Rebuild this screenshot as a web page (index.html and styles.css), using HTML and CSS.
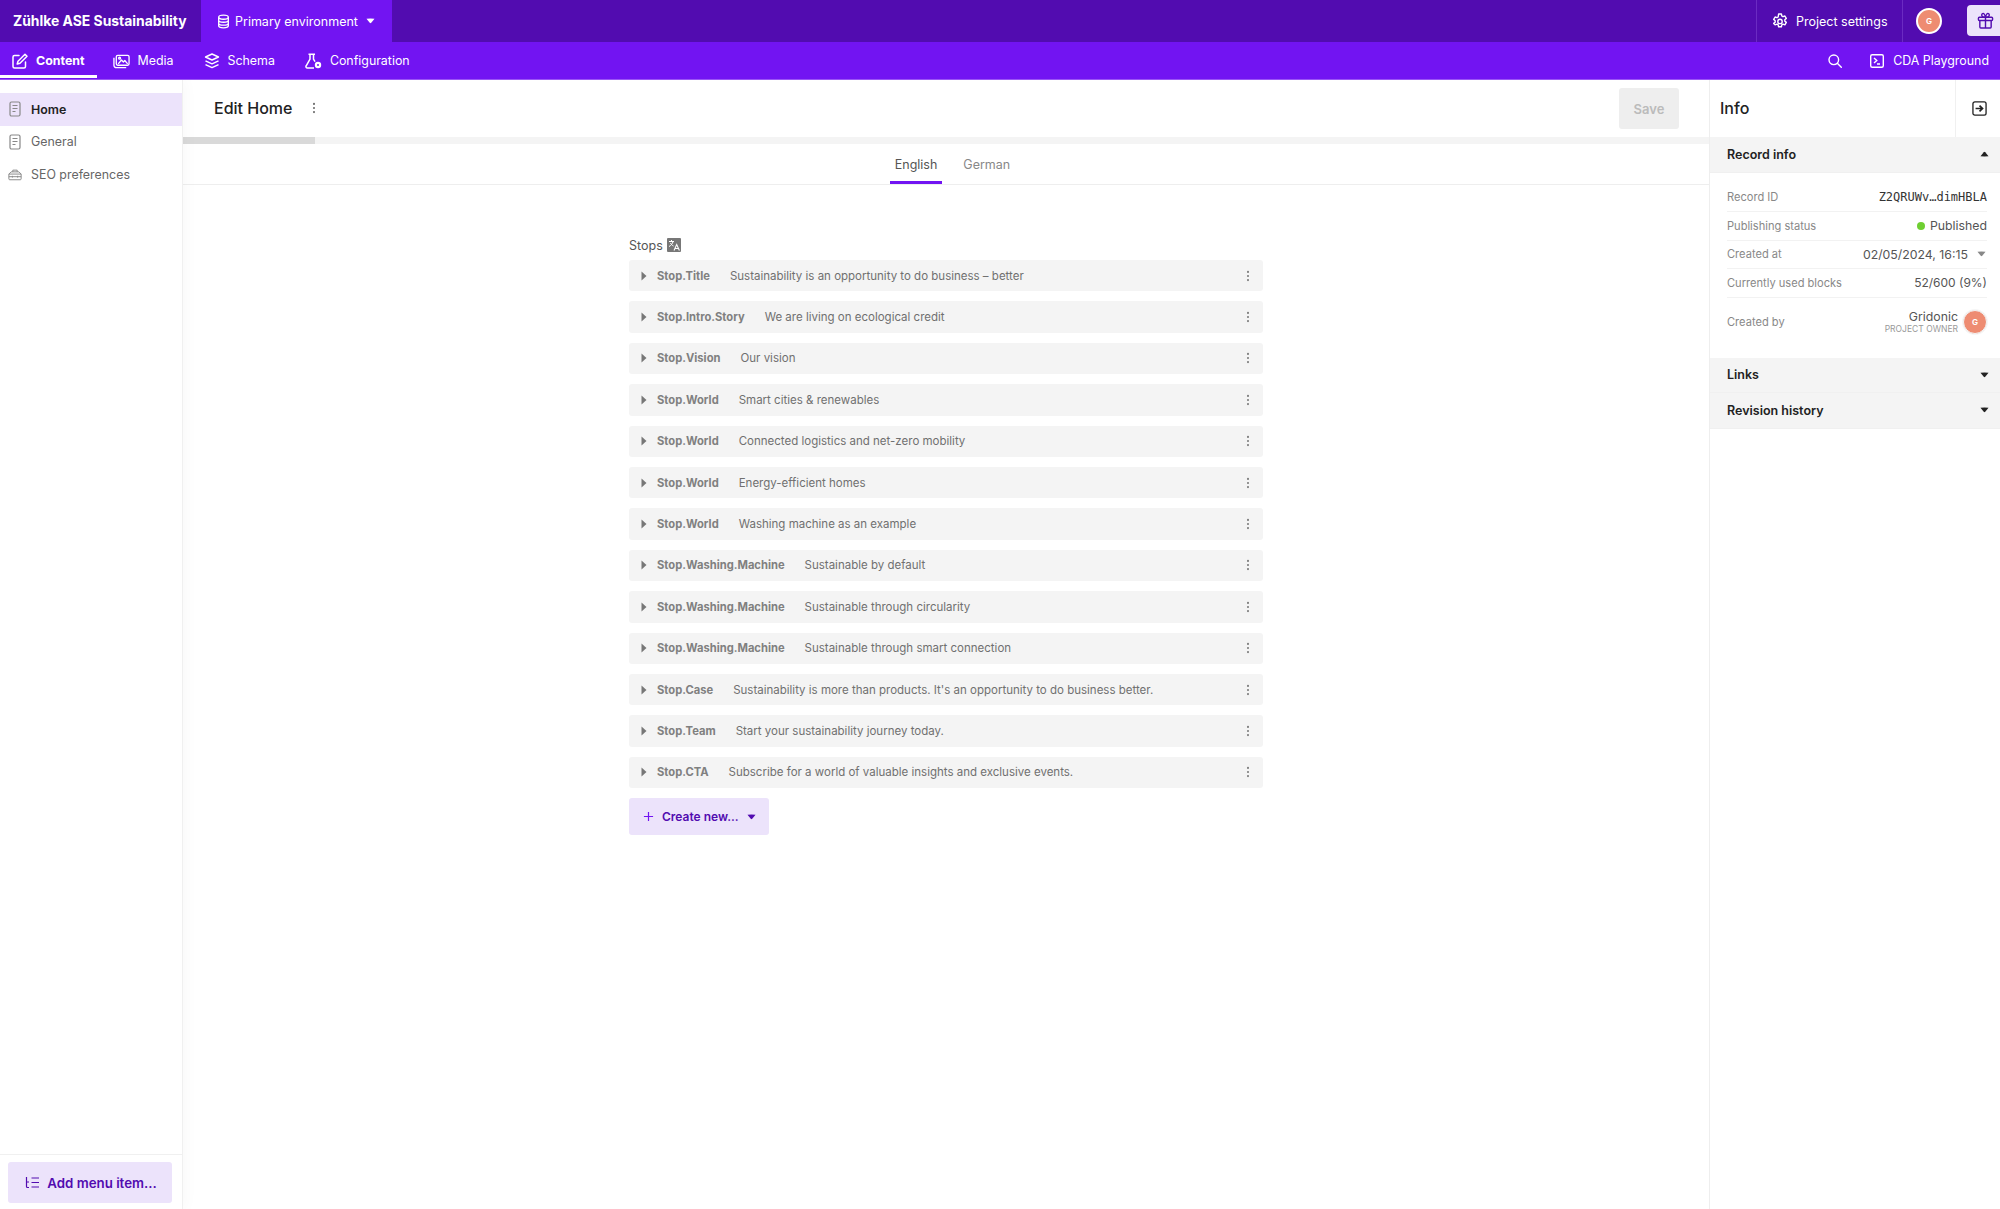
FILE: index.html
```html
<!DOCTYPE html>
<html lang="en">
<head>
<meta charset="utf-8">
<title>Edit Home</title>
<link rel="stylesheet" href="styles.css">
</head>
<body>
<svg class="defs" width="0" height="0" aria-hidden="true">
  <symbol id="doc" viewBox="0 0 14 16"><rect x="2" y="1" width="10" height="14" rx="1.5" fill="none" stroke="currentColor" stroke-width="1.2"/><path d="M4.5 4.5h5M4.5 7.5h5M4.5 10.5h3" stroke="currentColor" stroke-width="1.1" fill="none"/></symbol>
  <symbol id="kebab" viewBox="0 0 4 14"><circle cx="2" cy="2.2" r="1.2"/><circle cx="2" cy="7" r="1.2"/><circle cx="2" cy="11.8" r="1.2"/></symbol>
  <symbol id="caret-r" viewBox="0 0 6 10"><path d="M0.5 0.5 L5.5 5 L0.5 9.5Z"/></symbol>
  <symbol id="caret-d" viewBox="0 0 10 6"><path d="M0.5 0.5 Q5 0.2 9.5 0.5 L5.8 5 Q5 5.8 4.2 5Z"/></symbol>
  <symbol id="caret-u" viewBox="0 0 10 6"><path d="M0.5 5.5 Q5 5.8 9.5 5.5 L5.8 1 Q5 0.2 4.2 1Z"/></symbol>
</svg>

<header class="topbar">
  <div class="brand">Zühlke ASE Sustainability</div>
  <div class="env">
    <svg class="icon-env" viewBox="0 0 14 16" fill="none" stroke="currentColor" stroke-width="1.4"><ellipse cx="7" cy="3.4" rx="5.2" ry="2.2"/><path d="M1.8 3.4v9.2c0 1.2 2.3 2.2 5.2 2.2s5.2-1 5.2-2.2V3.4M1.8 6.6c0 1.2 2.3 2.2 5.2 2.2s5.2-1 5.2-2.2M1.8 9.8c0 1.2 2.3 2.2 5.2 2.2s5.2-1 5.2-2.2"/></svg>
    <span>Primary environment</span>
    <svg class="caret-env"><use href="#caret-d"/></svg>
  </div>
  <div class="top-spacer"></div>
  <div class="settings">
    <svg class="icon-gear" viewBox="0 0 16 16" fill="none" stroke="currentColor" stroke-width="1.4" stroke-linejoin="round"><path d="M6.6 1h2.8l.4 2 1.2.7 1.9-.7 1.4 2.4-1.5 1.3v1.4l1.5 1.3-1.4 2.4-1.9-.7-1.2.7-.4 2H6.600l-.4-2-1.2-.7-1.900.7L1.700 10.400l1.500-1.300V7.700L1.700 6.400l1.400-2.400 1.900.7 1.200-.7z"/><circle cx="8" cy="8.400" r="2.200"/></svg>
    <span>Project settings</span>
  </div>
  <div class="user"><span class="avatar">G</span></div>
  <div class="gift">
    <svg viewBox="0 0 18 18" fill="none" stroke="currentColor" stroke-width="1.500"><rect x="1.500" y="5.500" width="15" height="3.500" rx="1"/><path d="M3 9v7a1 1 0 0 0 1 1h10a1 1 0 0 0 1-1V9M9 5.500V17M9 5.500C7 5.500 5 4.800 5 3.100 5 1.800 6.600 1 7.500 2 8.300 2.900 9 5.500 9 5.500zM9 5.500c2 0 4-.7 4-2.400 0-1.300-1.600-2.100-2.500-1.100C9.700 2.900 9 5.500 9 5.500z"/></svg>
  </div>
</header>

<nav class="navbar">
  <a class="nav-item active">
    <svg viewBox="0 0 16 16" fill="none" stroke="currentColor" stroke-width="1.500" stroke-linejoin="round" stroke-linecap="round"><path d="M7 2.500H2.500a1.500 1.500 0 0 0-1.500 1.500v9.500a1.500 1.500 0 0 0 1.500 1.500H12a1.500 1.500 0 0 0 1.500-1.500V9"/><path d="M13 1.200l2 2-7 7-2.800.8.800-2.800z"/></svg>
    <span>Content</span>
  </a>
  <a class="nav-item">
    <svg class="wide" viewBox="0 0 18 16" fill="none" stroke="currentColor" stroke-width="1.400" stroke-linejoin="round"><rect x="3.500" y="2" width="13.500" height="10.500" rx="1.500"/><path d="M1 4.500v8A2.500 2.500 0 0 0 3.500 15H14"/><path d="M5.500 11l3.500-4 2 2 1.500-1.500 3 3.500" /><circle cx="7" cy="5" r="1"/></svg>
    <span>Media</span>
  </a>
  <a class="nav-item">
    <svg viewBox="0 0 16 16" fill="none" stroke="currentColor" stroke-width="1.400" stroke-linejoin="round"><path d="M8 1l6.500 3L8 7 1.500 4z"/><path d="M1.500 7.800L8 10.800l6.500-3M1.500 11.600L8 14.600l6.500-3"/></svg>
    <span>Schema</span>
  </a>
  <a class="nav-item">
    <svg class="wide" viewBox="0 0 17 16" fill="none" stroke="currentColor" stroke-width="1.500" stroke-linejoin="round"><path d="M3.500 1.200h6.500M5 1.200v5L1.200 12.800A1.400 1.400 0 0 0 2.400 15H9M8.500 1.200v5l1.500 2.500"/><circle cx="13" cy="12" r="3.200" fill="currentColor" stroke="none"/><circle cx="13" cy="12" r="1" fill="#7214f2" stroke="none"/></svg>
    <span>Configuration</span>
  </a>
  <div class="nav-spacer"></div>
  <svg class="nav-search" viewBox="0 0 14 14" fill="none" stroke="currentColor" stroke-width="1.400"><circle cx="5.800" cy="5.800" r="4.800"/><path d="M9.300 9.300L13.300 13.300" stroke-linecap="round"/></svg>
  <a class="nav-item cda">
    <svg viewBox="0 0 16 16" fill="none" stroke="currentColor" stroke-width="1.400"><rect x="1.700" y="1.700" width="12.600" height="12.600" rx="1.500"/><path d="M5 5l2.800 2.500L5 10M8 11h3"/></svg>
    <span>CDA Playground</span>
  </a>
</nav>

<div class="layout">
  <aside class="sidebar">
    <ul class="menu">
      <li class="menu-item selected"><svg class="menu-icon"><use href="#doc"/></svg><span>Home</span></li>
      <li class="menu-item"><svg class="menu-icon"><use href="#doc"/></svg><span>General</span></li>
      <li class="menu-item"><svg class="menu-icon box" viewBox="0 0 16 14" fill="none" stroke="currentColor" stroke-width="1.100"><path d="M1 6.500h14v5.500a1 1 0 0 1-1 1H2a1 1 0 0 1-1-1zM1 6.500L3.500 4h9L15 6.500M5.500 4V2h5v2M1 9.500h14M5 8.500v2M11 8.500v2"/></svg><span>SEO preferences</span></li>
    </ul>
    <div class="side-foot">
      <button class="add-menu">
        <svg viewBox="0 0 15 13" fill="none" stroke="currentColor" stroke-width="1.200"><path d="M1.500 1v9.500a1 1 0 0 0 1 1H4M1.500 6H4M6.500 2H14M6.500 6.500H14M6.500 11H14"/></svg>
        <span>Add menu item...</span>
      </button>
    </div>
  </aside>

  <main class="main">
    <div class="edit-head">
      <h1>Edit Home</h1>
      <svg class="kebab-head"><use href="#kebab"/></svg>
      <div class="head-spacer"></div>
      <button class="save">Save</button>
    </div>
    <div class="scrolltrack"><div class="scrollthumb"></div></div>
    <div class="tabs">
      <div class="tab active">English</div>
      <div class="tab">German</div>
    </div>
    <section class="form">
      <div class="field-label">Stops
        <svg class="translate" viewBox="0 0 14 14"><rect width="14" height="14" rx="1" fill="#777"/><path d="M2 3.500h5M4.500 2v1.500M6 3.500C5.500 6 4 7.500 2 8.500M3.500 5c.6 1.500 1.800 2.500 3 3" stroke="#fff" stroke-width="1" fill="none"/><path d="M7 12.500l2.700-6 2.700 6M8 10.500h3.500" stroke="#fff" stroke-width="1.100" fill="none"/></svg>
      </div>
      <div class="block"><svg class="caret"><use href="#caret-r"/></svg><b>Stop.Title</b><span>Sustainability is an opportunity to do business – better</span><svg class="kebab"><use href="#kebab"/></svg></div>
      <div class="block"><svg class="caret"><use href="#caret-r"/></svg><b>Stop.Intro.Story</b><span>We are living on ecological credit</span><svg class="kebab"><use href="#kebab"/></svg></div>
      <div class="block"><svg class="caret"><use href="#caret-r"/></svg><b>Stop.Vision</b><span>Our vision</span><svg class="kebab"><use href="#kebab"/></svg></div>
      <div class="block"><svg class="caret"><use href="#caret-r"/></svg><b>Stop.World</b><span>Smart cities &amp; renewables</span><svg class="kebab"><use href="#kebab"/></svg></div>
      <div class="block"><svg class="caret"><use href="#caret-r"/></svg><b>Stop.World</b><span>Connected logistics and net-zero mobility</span><svg class="kebab"><use href="#kebab"/></svg></div>
      <div class="block"><svg class="caret"><use href="#caret-r"/></svg><b>Stop.World</b><span>Energy-efficient homes</span><svg class="kebab"><use href="#kebab"/></svg></div>
      <div class="block"><svg class="caret"><use href="#caret-r"/></svg><b>Stop.World</b><span>Washing machine as an example</span><svg class="kebab"><use href="#kebab"/></svg></div>
      <div class="block"><svg class="caret"><use href="#caret-r"/></svg><b>Stop.Washing.Machine</b><span>Sustainable by default</span><svg class="kebab"><use href="#kebab"/></svg></div>
      <div class="block"><svg class="caret"><use href="#caret-r"/></svg><b>Stop.Washing.Machine</b><span>Sustainable through circularity</span><svg class="kebab"><use href="#kebab"/></svg></div>
      <div class="block"><svg class="caret"><use href="#caret-r"/></svg><b>Stop.Washing.Machine</b><span>Sustainable through smart connection</span><svg class="kebab"><use href="#kebab"/></svg></div>
      <div class="block"><svg class="caret"><use href="#caret-r"/></svg><b>Stop.Case</b><span>Sustainability is more than products. It's an opportunity to do business better.</span><svg class="kebab"><use href="#kebab"/></svg></div>
      <div class="block"><svg class="caret"><use href="#caret-r"/></svg><b>Stop.Team</b><span>Start your sustainability journey today.</span><svg class="kebab"><use href="#kebab"/></svg></div>
      <div class="block"><svg class="caret"><use href="#caret-r"/></svg><b>Stop.CTA</b><span>Subscribe for a world of valuable insights and exclusive events.</span><svg class="kebab"><use href="#kebab"/></svg></div>
      <button class="create">
        <svg class="plus" viewBox="0 0 12 12" fill="none" stroke="currentColor" stroke-width="1.300"><path d="M6 1v10M1 6h10"/></svg>
        <span>Create new...</span>
        <svg class="caret-create"><use href="#caret-d"/></svg>
      </button>
    </section>
  </main>

  <aside class="info">
    <div class="info-head">
      <h2>Info</h2>
      <div class="collapse">
        <svg viewBox="0 0 16 16" fill="none" stroke="#222" stroke-width="1.400"><rect x="1" y="1" width="14" height="14" rx="2"/><path d="M3.800 8h7M8 5l3.200 3L8 11" stroke-width="1.800"/></svg>
      </div>
    </div>
    <div class="acc-head"><span>Record info</span><svg class="acc-caret"><use href="#caret-u"/></svg></div>
    <dl class="details">
      <div class="row"><dt>Record ID</dt><dd class="mono">Z2QRUWv…dimHBLA</dd></div>
      <div class="row"><dt>Publishing status</dt><dd class="status"><i class="dot"></i>Published</dd></div>
      <div class="row"><dt>Created at</dt><dd class="date">02/05/2024, 16:15<svg class="date-caret"><use href="#caret-d"/></svg></dd></div>
      <div class="row"><dt>Currently used blocks</dt><dd class="usage">52/600 (9%)</dd></div>
      <div class="row owner"><dt>Created by</dt><dd class="creator"><div class="creator-text"><div class="creator-name">Gridonic</div><div class="creator-role">PROJECT OWNER</div></div><span class="avatar small">G</span></dd></div>
    </dl>
    <div class="acc-head links"><span>Links</span><svg class="acc-caret"><use href="#caret-d"/></svg></div>
    <div class="acc-head"><span>Revision history</span><svg class="acc-caret"><use href="#caret-d"/></svg></div>
  </aside>
</div>
</body>
</html>
```
FILE: styles.css
```css
* { box-sizing: border-box; }
html, body { margin: 0; height: 100%; }
body {
  font-family: Inter, "Liberation Sans", sans-serif;
  color: #222;
  background: #fff;
  height: 1209px;
  overflow: hidden;
  display: flex;
  flex-direction: column;
}
.defs { position: absolute; }
.topbar {
  height: 42px;
  background: #520cb0;
  color: #fff;
  display: flex;
  align-items: stretch;
  font-size: 12.500px;
  flex: none;
}
.brand { width: 201px; padding-left: 13px; display: flex; align-items: center; font-weight: 700; font-size: 13.900px; white-space: nowrap; }
.env { width: 191px; background: #7214f2; display: flex; align-items: center; padding-left: 16px; }
.icon-env { width: 13px; height: 15px; margin-right: 5px; }
.caret-env { width: 9px; height: 6px; margin-left: 8px; fill: #fff; }
.top-spacer { flex: 1; }
.settings { width: 147px; border-left: 1px solid #6b2bc2; border-right: 1px solid #6b2bc2; display: flex; align-items: center; padding-left: 15px; }
.icon-gear { width: 16px; height: 16px; margin-right: 8px; }
.user { width: 64px; display: flex; align-items: center; padding-left: 13px; }
.avatar {
  width: 26px; height: 26px; border-radius: 50%;
  background: #ee8c72; border: 2px solid #fff; color: #fff;
  font-size: 8px; font-weight: 700;
  display: flex; align-items: center; justify-content: center;
}
.gift { width: 33px; height: 31px; margin-top: 5px; background: #ece3fb; color: #520cb0; border-radius: 4px 0 0 4px; display: flex; align-items: center; justify-content: center; }
.gift svg { width: 17px; height: 17px; margin-left: 3px; }
.navbar {
  height: 38px;
  background: #7214f2;
  border-bottom: 1px solid #9a55f5;
  color: #fff;
  display: flex;
  align-items: stretch;
  font-size: 12.400px;
  flex: none;
  position: relative;
  z-index: 2;
}
.nav-item { display: flex; align-items: center; padding: 0 12px; margin-right: 6px; position: relative; white-space: nowrap; }
.nav-item svg { width: 16px; height: 16px; margin-right: 8px; }
.nav-item svg.wide { width: 17px; }
.nav-item.active { font-weight: 700; margin-right: 4px; }
.nav-item.active::after { content: ""; position: absolute; left: 0; right: 0; bottom: 1px; height: 3px; background: #fff; }
.nav-spacer { flex: 1; }
.nav-search { width: 14px; height: 14px; align-self: center; margin-right: 15px; }
.nav-item.cda { margin-right: 0; padding-right: 11px; }
.layout { flex: 1; display: flex; min-height: 0; }
.sidebar {
  width: 183px; flex: none;
  border-right: 1px solid #f0f0f0;
  box-shadow: 2px 0 14px rgba(0,0,0,.03);
  display: flex; flex-direction: column;
  padding-top: 13px;
  position: relative;
}
.menu { list-style: none; margin: 0; padding: 0; flex: 1; }
.menu-item { height: 32.500px; display: flex; align-items: center; padding-left: 8px; font-size: 12.400px; color: #666; }
.menu-item.selected { background: #ece3fb; color: #222; font-weight: 600; }
.menu-icon { width: 14px; height: 16px; margin-right: 9px; color: #888; flex: none; }
.menu-icon.box { width: 14px; height: 13px; }
.side-foot { border-top: 1px solid #f0f0f0; padding: 7px 10px 6px 8px; }
.add-menu {
  width: 164px; height: 41px; border: 0; border-radius: 3px;
  background: #ece3fb; color: #520cb0;
  font: 600 13.300px Inter, "Liberation Sans", sans-serif;
  display: flex; align-items: center; justify-content: center; gap: 7px;
}
.add-menu svg { width: 15px; height: 13px; margin-left: 2px; }
.main { flex: 1; min-width: 0; display: flex; flex-direction: column; }
.edit-head { height: 57px; display: flex; align-items: center; padding: 0 31px 0 31px; flex: none; }
.edit-head h1 { margin: 0 0 2px; font-size: 16px; font-weight: 500; color: #222; }
.kebab-head { width: 4px; height: 12px; margin: 0 0 2px 20px; fill: #666; }
.head-spacer { flex: 1; }
.save {
  width: 60px; height: 41px; border: 0; border-radius: 3px; background: #eee; color: #bbb;
  font: 600 13px Inter, "Liberation Sans", sans-serif;
  margin-right: -1px;
}
.scrolltrack { height: 7px; background: #f4f4f4; flex: none; }
.scrollthumb { width: 132px; height: 100%; background: #d9d9d9; }
.tabs { height: 41px; border-bottom: 1px solid #eeeeee; display: flex; justify-content: center; gap: 16px; padding-left: 13px; flex: none; }
.tab { padding: 3px 5px 0; font-size: 12.500px; color: #888; display: flex; align-items: center; border-bottom: 3px solid transparent; }
.tab.active { color: #555; border-bottom-color: #7214f2; }
.form { width: 634px; margin-left: 446px; padding-top: 50px; }
.field-label { font-size: 12.500px; color: #555; height: 25px; display: flex; align-items: center; gap: 4px; padding-bottom: 5px; }
.translate { width: 14px; height: 14px; }
.block {
  height: 31.400px; margin-bottom: 10px; border-radius: 3px; background: #f4f4f4;
  display: flex; align-items: center; padding-left: 12px;
  font-size: 11.500px; color: #707070; white-space: nowrap;
}
.block b { font-weight: 700; font-size: 11.200px; color: #808080; margin-right: 20px; }
.block span { flex: 1; }
.caret { width: 6px; height: 10px; fill: #777; margin-right: 10px; flex: none; }
.kebab { width: 4px; height: 12px; fill: #777; margin-right: 13px; flex: none; }
.create {
  width: 140px; height: 37px; border: 0; border-radius: 3px; background: #ece3fb; color: #520cb0;
  font: 600 12px Inter, "Liberation Sans", sans-serif;
  display: flex; align-items: center; padding: 0 0 0 14px;
}
.plus { width: 11px; height: 11px; margin-right: 8px; color: #7214f2; }
.caret-create { width: 9px; height: 6px; margin-left: 8px; fill: #520cb0; }
.info { width: 291px; flex: none; border-left: 1px solid #eeeeee; display: flex; flex-direction: column; }
.info-head { height: 57px; display: flex; align-items: center; padding-left: 10px; flex: none; }
.info-head h2 { margin: 0 0 2px; flex: 1; font-size: 16px; font-weight: 500; }
.collapse { width: 45px; height: 100%; border-left: 1px solid #f0f0f0; display: flex; align-items: center; justify-content: center; }
.collapse svg { width: 15px; height: 15px; margin-left: 2px; }
.acc-head { height: 35.500px; background: #f4f4f4; border-bottom: 1px solid #f0f0f0; display: flex; align-items: center; justify-content: space-between; padding: 0 11px 0 17px; font-size: 12.500px; font-weight: 600; color: #222; flex: none; }
.acc-caret { width: 9px; height: 6px; fill: #222; }
.details { margin: 0; padding: 11px 13px 12px 17px; }
.row { display: flex; justify-content: space-between; align-items: center; height: 28.500px; border-bottom: 1px solid #f2f2f2; font-size: 11.100px; }
.row dt { color: #888; }
.row dd { margin: 0; color: #555; font-size: 12.300px; display: flex; align-items: center; }
.row dd.mono { font-family: "DejaVu Sans Mono", "Liberation Mono", monospace; font-size: 12px; color: #333; }
.row dd.usage { font-size: 12px; }
.dot { width: 8px; height: 8px; border-radius: 50%; background: #6fcf32; margin-right: 5px; }
.date-caret { width: 9px; height: 6px; margin-left: 9px; margin-right: 1px; fill: #888; }
.row.owner { height: 48px; border-bottom: 0; }
.creator-text { text-align: right; margin-right: 5px; }
.creator-name { line-height: 15px; }
.creator-role { font-size: 8.500px; color: #999; line-height: 11px; }
.avatar.small { width: 24px; height: 24px; border: 1px solid #f3f3f3; box-shadow: 0 0 0 1px #f6f6f6; }
```
